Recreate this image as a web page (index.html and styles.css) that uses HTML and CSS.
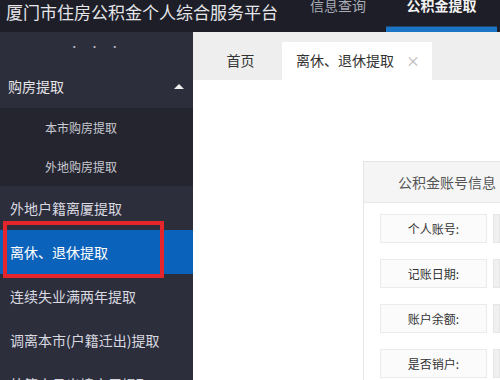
FILE: index.html
```html
<!DOCTYPE html>
<html lang="zh-CN">
<head>
<meta charset="utf-8">
<link rel="stylesheet" href="styles.css">
</head>
<body>
<div class="page">
  <header class="topbar">
    <div class="title">厦门市住房公积金个人综合服务平台</div>
    <nav class="topnav">
      <div class="nav-item">信息查询</div>
      <div class="nav-item active">公积金提取</div>
    </nav>
  </header>
  <div class="body">
    <aside class="sidebar">
      <div class="dots">• • •</div>
      <div class="menu-head"><span>购房提取</span><span class="tri"></span></div>
      <div class="submenu">
        <div class="sub-item">本市购房提取</div>
        <div class="sub-item">外地购房提取</div>
      </div>
      <div class="menu-item">外地户籍离厦提取</div>
      <div class="menu-item current">离休、退休提取</div>
      <div class="menu-item">连续失业满两年提取</div>
      <div class="menu-item">调离本市(户籍迁出)提取</div>
      <div class="menu-item">外籍人员出境定居提取</div>
      <div class="redbox"></div>
    </aside>
    <main class="main">
      <div class="tabs">
        <div class="tab">首页</div>
        <div class="tab on">离休、退休提取<span class="close">×</span></div>
      </div>
      <div class="content">
        <section class="panel">
          <div class="panel-head">公积金账号信息</div>
          <div class="rows">
            <div class="row"><div class="label">个人账号:</div><div class="value"></div></div>
            <div class="row"><div class="label">记账日期:</div><div class="value"></div></div>
            <div class="row"><div class="label">账户余额:</div><div class="value"></div></div>
            <div class="row"><div class="label">是否销户:</div><div class="value"></div></div>
          </div>
        </section>
      </div>
    </main>
  </div>
</div>
</body>
</html>
```

FILE: styles.css
```css
* { box-sizing: border-box; margin: 0; padding: 0; }
html, body { width: 500px; height: 380px; overflow: hidden; }
body {
  font-family: "Noto Sans CJK SC", "Noto Sans", sans-serif;
  background: #ffffff;
}
.page { width: 500px; height: 380px; display: flex; flex-direction: column; overflow: hidden; }

.topbar {
  height: 32px;
  flex: none;
  background: #1d1e27;
  display: flex;
  align-items: flex-start;
  overflow: hidden;
}
.title {
  color: #e6e6ea;
  font-size: 17px;
  line-height: 24px;
  padding-left: 6px;
  width: 290px;
  white-space: nowrap;
}
.topnav { display: flex; height: 32px; }
.nav-item {
  width: 96px;
  height: 32px;
  font-size: 14px;
  line-height: 10px;
  color: #a9abb5;
  text-align: center;
  white-space: nowrap;
}
.nav-item.active {
  width: 111px;
  color: #f2f2f2;
  font-weight: bold;
  border-bottom: 5px solid #1c74c4;
  background: linear-gradient(to bottom, #1d1e27 0, #1d1e27 26px, #1c6fbf 27px);
}

.body { flex: 1; display: flex; min-height: 0; }

.sidebar {
  position: relative;
  width: 193px;
  flex: none;
  background: #2d2e3b;
  color: #e0e0e6;
}
.dots {
  height: 32px;
  line-height: 30px;
  text-align: center;
  color: #b9bac4;
  font-size: 10px;
  letter-spacing: 4px;
}
.menu-head {
  height: 44px;
  display: flex;
  align-items: center;
  justify-content: space-between;
  padding: 0 9px 0 8px;
  font-size: 14px;
  color: #e6e6ea;
}
.tri {
  width: 0; height: 0;
  border-left: 5px solid transparent;
  border-right: 5px solid transparent;
  border-bottom: 5px solid #f0f0f0;
}
.submenu { background: #24252f; padding: 0; }
.sub-item {
  height: 39px;
  line-height: 39px;
  padding-left: 45px;
  font-size: 12px;
  color: #c9cad2;
}
.menu-item {
  height: 44px;
  line-height: 44px;
  padding-left: 10px;
  font-size: 14px;
  color: #d8d9e0;
  white-space: nowrap;
}
.menu-item.current { background: #0b62bb; color: #ffffff; }
.redbox {
  position: absolute;
  left: 3px;
  top: 189px;
  width: 161px;
  height: 57px;
  border: 4px solid #e4262c;
}

.main { flex: 1; display: flex; flex-direction: column; min-width: 0; background: #ffffff; }
.tabs {
  height: 48px;
  flex: none;
  background: #eeeeee;
  display: flex;
  align-items: flex-end;
}
.tab {
  width: 89px;
  height: 38px;
  line-height: 36px;
  text-align: center;
  font-size: 14px;
  color: #333333;
  padding-left: 6px;
}
.tab.on {
  width: 150px;
  background: #ffffff;
  text-align: left;
  padding-left: 14px;
  white-space: nowrap;
}
.close { color: #b8b8b8; font-size: 14px; margin-left: 12px; }

.content { flex: 1; padding: 81px 0 0 170px; }
.panel {
  border: 1px solid #e6e6e6;
  border-right: none;
  height: 240px;
}
.panel-head {
  height: 41px;
  line-height: 41px;
  background: #f5f5f5;
  border-bottom: 1px solid #e8e8e8;
  padding-left: 34px;
  font-size: 14px;
  color: #555555;
  white-space: nowrap;
}
.rows { display: flex; flex-direction: column; gap: 16px; padding: 11px 0 0 16px; }
.row { display: flex; gap: 6px; height: 29px; }
.label {
  width: 107px;
  border: 1px solid #ebebeb;
  background: #fbfbfb;
  text-align: center;
  line-height: 27px;
  font-size: 12px;
  color: #333333;
}
.value { flex: 1; background: #f0f0f0; border: 1px solid #e6e6e6; }
```
